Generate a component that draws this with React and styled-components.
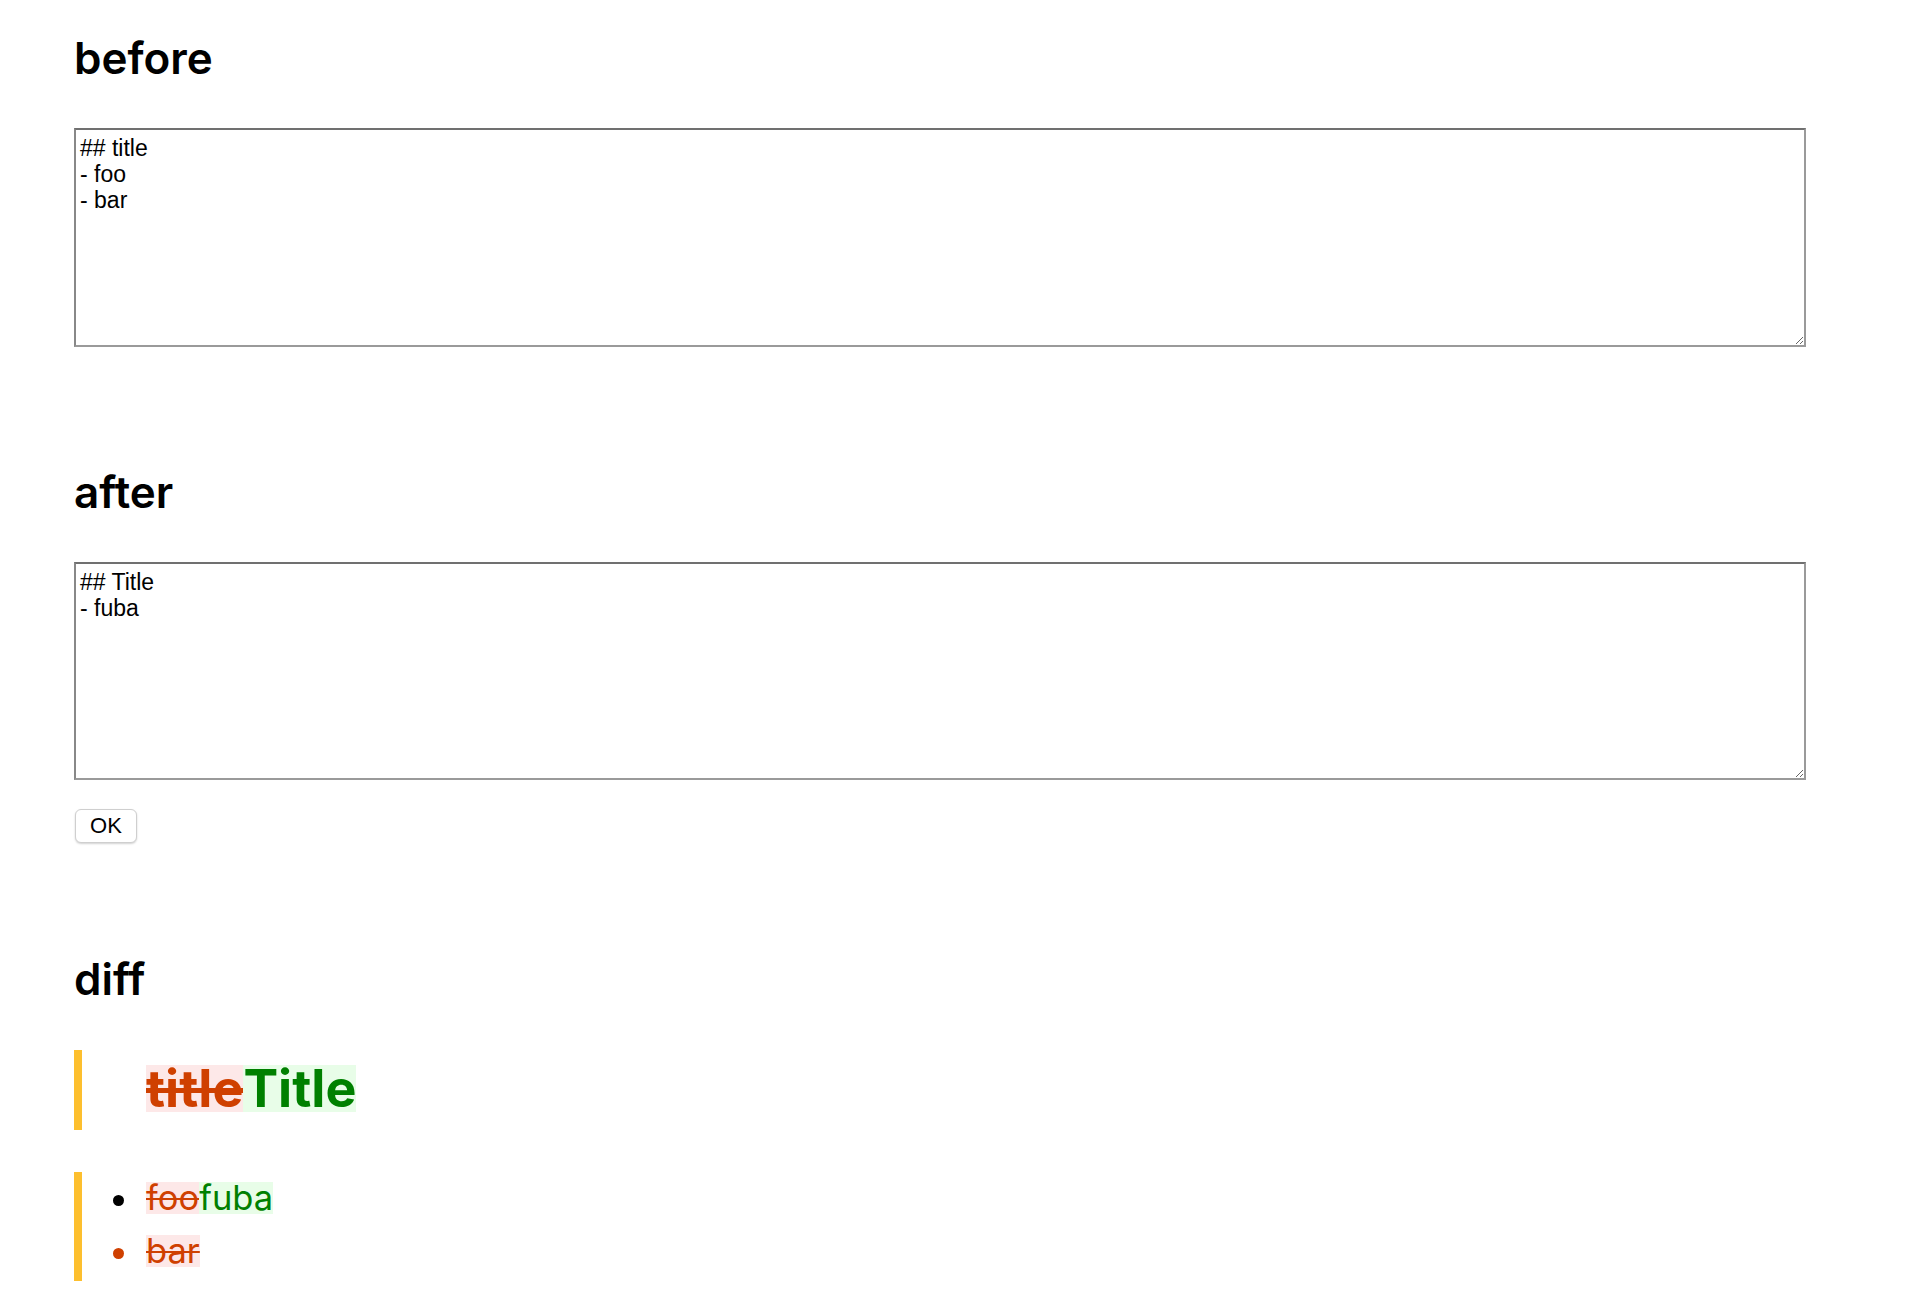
import React from 'react';
import styled, { createGlobalStyle } from 'styled-components';

const GlobalStyle = createGlobalStyle`
  body {
    margin: 0;
    background: #ffffff;
    font-family: Inter, "Noto Sans", sans-serif;
    color: #000000;
  }
`;

const Page = styled('div')`
  padding: 34px 0 40px 74px;
  width: 1732px;
`;

const Heading = styled('h1')`
  margin: ${(p) => p.$top || 0}px 0 0 0;
  font-family: Inter, "Noto Sans", sans-serif;
  font-size: 44px;
  font-weight: 600;
  line-height: 48px;
`;

const Editor = styled('textarea')`
  display: block;
  box-sizing: border-box;
  width: 1732px;
  height: ${(p) => p.$height}px;
  margin-top: 46px;
  padding: 5px 4px 4px;
  border: 2px solid #9a9a9a;
  border-top-color: #707070;
  border-left-color: #888888;
  font-family: "Liberation Sans", Arial, sans-serif;
  font-size: 23px;
  line-height: 26px;
  color: #000000;
  background: #ffffff;
  resize: both;
  outline: none;
`;

const OkButton = styled('button')`
  display: block;
  box-sizing: border-box;
  width: 62px;
  height: 34px;
  margin: 29px 0 0 1px;
  padding: 0;
  border: 1px solid #cfcfcf;
  border-radius: 6px;
  background: #ffffff;
  box-shadow: 0 1px 2px rgba(0, 0, 0, 0.18);
  font-family: "Liberation Sans", Arial, sans-serif;
  font-size: 22px;
  color: #000000;
`;

const DiffBlock = styled('div')`
  border-left: 8px solid #fdbf2e;
  margin-top: ${(p) => p.$top}px;
  padding: ${(p) => p.$pad};
`;

const DiffTitle = styled('h2')`
  margin: 0;
  font-family: Inter, "Noto Sans", sans-serif;
  font-size: 52px;
  font-weight: 700;
  line-height: 47px;
  height: 47px;
`;

const Removed = styled('span')`
  display: inline-block;
  height: ${(p) => p.$h}px;
  line-height: ${(p) => p.$h}px;
  background: #fde8e8;
  color: #cf4000;
  text-decoration: line-through;
  text-decoration-thickness: ${(p) => p.$strike}px;
`;

const Added = styled('span')`
  display: inline-block;
  height: ${(p) => p.$h}px;
  line-height: ${(p) => p.$h}px;
  background: #e8fde8;
  color: #008000;
`;

const DiffList = styled('ul')`
  margin: 0;
  padding: 0 0 0 31px;
  list-style: none;
`;

const DiffItem = styled('li')`
  display: flex;
  align-items: center;
  height: 32px;
  line-height: 32px;
  font-size: 34.5px;
  color: ${(p) => (p.$removed ? '#cf4000' : '#000000')};
  & + & {
    margin-top: 21px;
  }
  &::before {
    content: '';
    width: 11px;
    height: 11px;
    margin: 5px 22px 0 0;
    border-radius: 50%;
    background: currentColor;
    flex: none;
  }
`;

export default function App() {
  return (
    <>
      <GlobalStyle />
      <Page>
        <Heading>before</Heading>
        <Editor $height={219} defaultValue={'## title\n- foo\n- bar'} />

        <Heading $top={121}>after</Heading>
        <Editor $height={218} defaultValue={'## Title\n- fuba'} />
        <OkButton>OK</OkButton>

        <Heading $top={112}>diff</Heading>
        <DiffBlock $top={47} $pad="15px 0 18px 64px">
          <DiffTitle>
            <Removed $h={47} $strike={5}>title</Removed>
            <Added $h={47}>Title</Added>
          </DiffTitle>
        </DiffBlock>
        <DiffBlock $top={42} $pad="10px 0 14px 0">
          <DiffList>
            <DiffItem>
              <Removed $h={32} $strike={2}>foo</Removed>
              <Added $h={32}>fuba</Added>
            </DiffItem>
            <DiffItem $removed>
              <Removed $h={32} $strike={2}>bar</Removed>
            </DiffItem>
          </DiffList>
        </DiffBlock>
      </Page>
    </>
  );
}
